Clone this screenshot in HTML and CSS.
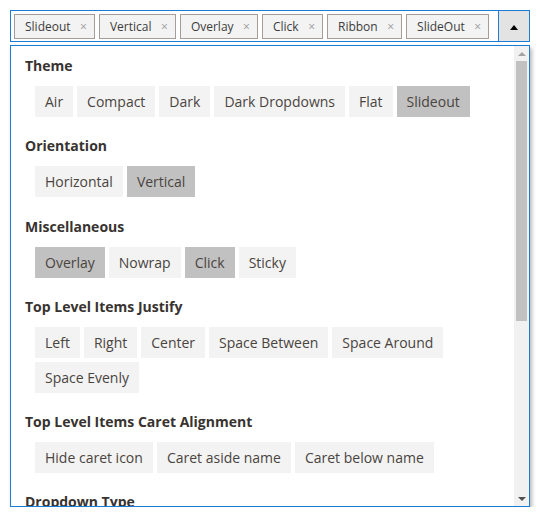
FILE: index.html
```html
<!DOCTYPE html>
<html>
<head>
<meta charset="utf-8">
<link rel="stylesheet" href="styles.css">
</head>
<body>
<div class="select">
  <div class="tags">
    <span class="tag">Slideout<span class="x">×</span></span>
    <span class="tag">Vertical<span class="x">×</span></span>
    <span class="tag">Overlay<span class="x">×</span></span>
    <span class="tag">Click<span class="x">×</span></span>
    <span class="tag">Ribbon<span class="x">×</span></span>
    <span class="tag">SlideOut<span class="x">×</span></span>
  </div>
  <div class="toggle"><span class="caret-up"></span></div>
</div>
<div class="panel">
  <div class="content">
    <div class="section">
      <div class="heading">Theme</div>
      <div class="opts">
        <span class="opt">Air</span><span class="opt">Compact</span><span class="opt">Dark</span><span class="opt">Dark Dropdowns</span><span class="opt">Flat</span><span class="opt sel">Slideout</span>
      </div>
    </div>
    <div class="section">
      <div class="heading">Orientation</div>
      <div class="opts">
        <span class="opt">Horizontal</span><span class="opt sel">Vertical</span>
      </div>
    </div>
    <div class="section">
      <div class="heading">Miscellaneous</div>
      <div class="opts">
        <span class="opt sel">Overlay</span><span class="opt">Nowrap</span><span class="opt sel">Click</span><span class="opt">Sticky</span>
      </div>
    </div>
    <div class="section">
      <div class="heading">Top Level Items Justify</div>
      <div class="opts">
        <span class="opt">Left</span><span class="opt">Right</span><span class="opt">Center</span><span class="opt">Space Between</span><span class="opt">Space Around</span><span class="opt">Space Evenly</span>
      </div>
    </div>
    <div class="section">
      <div class="heading">Top Level Items Caret Alignment</div>
      <div class="opts">
        <span class="opt">Hide caret icon</span><span class="opt">Caret aside name</span><span class="opt">Caret below name</span>
      </div>
    </div>
    <div class="section">
      <div class="heading">Dropdown Type</div>
      <div class="opts">
        <span class="opt">Mega</span><span class="opt">Flyout</span><span class="opt sel">Ribbon</span>
      </div>
    </div>
    <div class="section">
      <div class="heading">Animation</div>
      <div class="opts">
        <span class="opt">Fade</span><span class="opt sel">SlideOut</span><span class="opt">None</span>
      </div>
    </div>
  </div>
  <div class="scrollbar">
    <div class="sb-btn"><span class="sb-up"></span></div>
    <div class="sb-track"><div class="sb-thumb"></div></div>
    <div class="sb-btn"><span class="sb-down"></span></div>
  </div>
</div>
</body>
</html>
```

FILE: styles.css
```css
html, body {
  margin: 0;
  padding: 0;
  background: #fff;
}
body {
  padding: 10px 10px 0 10px;
  font-family: "Open Sans", "Noto Sans", sans-serif;
}
.select {
  display: flex;
  height: 32px;
  box-sizing: border-box;
  border: 1px solid #1a7cd6;
  background: #fff;
}
.tags {
  flex: 1;
  display: flex;
  align-items: center;
  gap: 4px;
  padding: 0 3px;
  overflow: hidden;
}
.tag {
  flex-shrink: 0;
  display: inline-flex;
  align-items: center;
  height: 25px;
  box-sizing: border-box;
  border: 1px solid #a59d96;
  background: #f3f3f3;
  padding: 0 7px 0 10px;
  font-size: 12px;
  color: #3c3c3c;
}
.tag .x {
  margin-left: 9.5px;
  color: #9a9a9a;
  font-size: 12px;
}
.toggle {
  flex-shrink: 0;
  width: 31px;
  box-sizing: border-box;
  border-left: 1px solid #1a7cd6;
  background: #e3e3e3;
  display: flex;
  align-items: center;
  justify-content: center;
}
.caret-up {
  width: 0;
  height: 0;
  border-left: 4.5px solid transparent;
  border-right: 4.5px solid transparent;
  border-bottom: 5px solid #000;
  margin-top: 3px;
}
.panel {
  margin-top: 3px;
  height: 462px;
  box-sizing: border-box;
  border: 1px solid #1a7cd6;
  display: flex;
  box-shadow: 2px 3px 4px rgba(0, 0, 0, 0.28);
  background: #fff;
}
.content {
  flex: 1;
  overflow: hidden;
  padding: 10px 14px 0 14px;
}
.section {
  margin-bottom: 19.25px;
}
.heading {
  font-weight: bold;
  font-size: 14px;
  line-height: 20px;
  color: #383330;
  margin-bottom: 10px;
}
.opts {
  display: flex;
  flex-wrap: wrap;
  gap: 4px;
  padding-left: 10px;
}
.opt {
  background: #f3f3f3;
  padding: 5px 10px;
  font-size: 14px;
  line-height: 21px;
  color: #4a4440;
}
.opt.sel {
  background: #c1c1c1;
}
.scrollbar {
  width: 15px;
  background: #f1f1f1;
  display: flex;
  flex-direction: column;
}
.sb-btn {
  height: 15px;
  display: flex;
  align-items: center;
  justify-content: center;
}
.sb-up {
  width: 0;
  height: 0;
  border-left: 4px solid transparent;
  border-right: 4px solid transparent;
  border-bottom: 4px solid #a3a3a3;
}
.sb-down {
  width: 0;
  height: 0;
  border-left: 4px solid transparent;
  border-right: 4px solid transparent;
  border-top: 4px solid #505050;
}
.sb-track {
  flex: 1;
  padding: 0 2px 0 2px;
}
.sb-thumb {
  height: 260px;
  background: #c1c1c1;
}
```
